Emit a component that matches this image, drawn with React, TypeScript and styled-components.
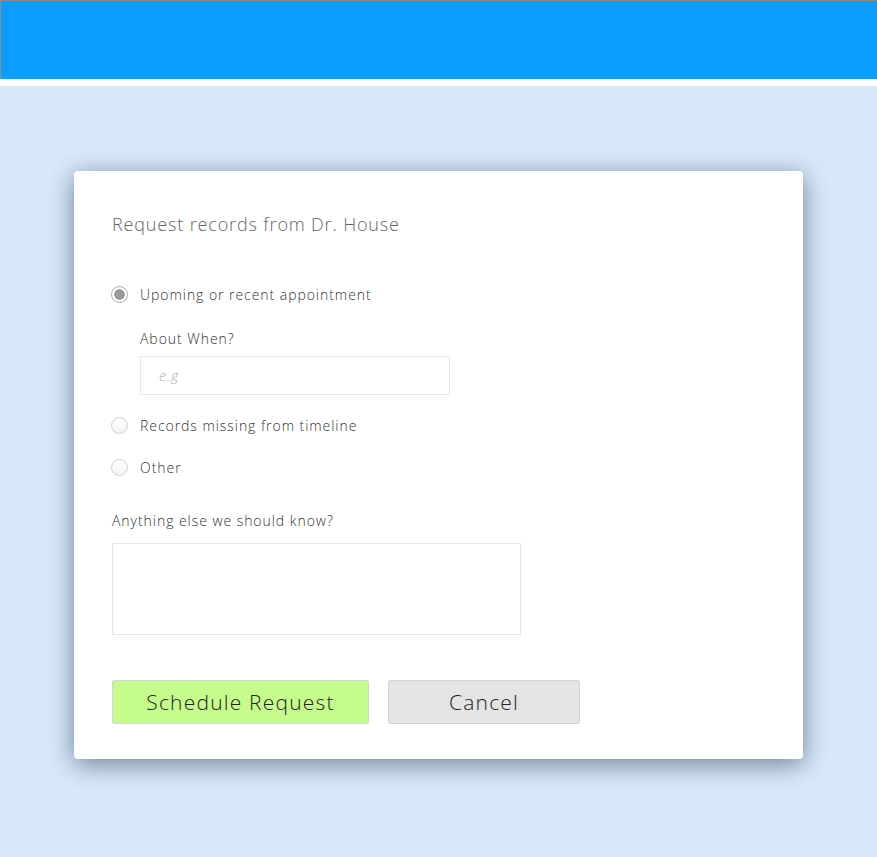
import * as React from "react";
import styled, { createGlobalStyle } from "styled-components";

const GlobalStyle = createGlobalStyle`
  html, body {
    margin: 0;
    padding: 0;
    background: #d9e9fa;
  }
  * {
    box-sizing: border-box;
  }
`;

interface Option {
  id: string;
  label: string;
}

const options: Option[] = [
  { id: "upcoming", label: "Upoming or recent appointment" },
  { id: "missing", label: "Records missing from timeline" },
  { id: "other", label: "Other" }
];

const App: React.FC = (): JSX.Element => {
  const [selected, setSelected] = React.useState("upcoming");

  return (
    <Page>
      <GlobalStyle />
      <TopBar />
      <Gap />
      <Content>
        <Card>
          <Title>Request records from Dr. House</Title>

          <Options>
            {options.map(option => (
              <React.Fragment key={option.id}>
                <RadioRow onClick={() => setSelected(option.id)}>
                  <Radio checked={selected === option.id} />
                  <RadioLabel>{option.label}</RadioLabel>
                </RadioRow>
                {option.id === "upcoming" && selected === "upcoming" && (
                  <SubField>
                    <FieldLabel>About When?</FieldLabel>
                    <WhenInput placeholder="e.g" />
                  </SubField>
                )}
              </React.Fragment>
            ))}
          </Options>

          <NotesLabel>Anything else we should know?</NotesLabel>
          <Notes />

          <Actions>
            <ActionButton variant="primary">Schedule Request</ActionButton>
            <ActionButton variant="secondary">Cancel</ActionButton>
          </Actions>
        </Card>
      </Content>
    </Page>
  );
};

export default App;

const Page = styled.div`
  min-height: 857px;
  background: #d9e9fa;
  font-family: "Open Sans", "Liberation Sans", sans-serif;
`;

const TopBar = styled.div`
  height: 79px;
  background: #0c9eff;
  border-top: 1px solid #8c8c8c;
  border-left: 1px solid #8c8c8c;
`;

const Gap = styled.div`
  height: 7px;
  background: #ffffff;
`;

const Content = styled.div`
  padding: 85px 0 0 74px;
`;

const Card = styled.div`
  width: 729px;
  height: 588px;
  background: #ffffff;
  border-radius: 4px;
  box-shadow: 0 5px 26px rgba(35, 55, 80, 0.6);
  padding: 41px 38px 0;
  display: flex;
  flex-direction: column;
`;

const Title = styled.h1`
  margin: 0;
  font-size: 18px;
  line-height: 24px;
  font-weight: 300;
  letter-spacing: 0.85px;
  color: #666;
`;

const Options = styled.div`
  display: flex;
  flex-direction: column;
  gap: 22px;
  margin-top: 48px;
`;

const RadioRow = styled.label`
  display: flex;
  align-items: center;
  gap: 12px;
  height: 20px;
  cursor: pointer;
`;

const Radio = styled.span<{ checked: boolean }>`
  width: 17px;
  height: 17px;
  border-radius: 50%;
  margin-left: -1px;
  border: 1px solid ${p => (p.checked ? "#a8a8a8" : "#cfcfcf")};
  background: ${p =>
    p.checked
      ? "radial-gradient(circle, #9a9a9a 0 5px, #ffffff 5.5px)"
      : "linear-gradient(#ffffff, #f3f3f3)"};
  flex-shrink: 0;
`;

const RadioLabel = styled.span`
  font-size: 14px;
  font-weight: 300;
  letter-spacing: 0.95px;
  color: #333;
`;

const SubField = styled.div`
  padding-left: 28px;
  margin-top: 3px;
  margin-bottom: -2px;
  display: flex;
  flex-direction: column;
  gap: 7px;
`;

const FieldLabel = styled.div`
  font-size: 14px;
  font-weight: 300;
  line-height: 20px;
  letter-spacing: 0.95px;
  color: #333;
`;

const WhenInput = styled.input`
  width: 310px;
  height: 39px;
  border: 1px solid #e6e6e6;
  padding: 0 18px;
  font-family: "Open Sans", "Liberation Sans", sans-serif;
  font-size: 14px;
  letter-spacing: 1px;
  outline: none;

  &::placeholder {
    color: #aaa;
    font-style: italic;
    font-weight: 300;
  }
`;

const NotesLabel = styled.div`
  margin-top: 34px;
  font-size: 14px;
  font-weight: 300;
  line-height: 20px;
  letter-spacing: 0.95px;
  color: #333;
`;

const Notes = styled.textarea`
  margin-top: 12px;
  width: 409px;
  height: 92px;
  border: 1px solid #e6e6e6;
  resize: none;
  outline: none;
`;

const Actions = styled.div`
  display: flex;
  gap: 19px;
  margin-top: 45px;
`;

const ActionButton = styled.button<{ variant: "primary" | "secondary" }>`
  height: 44px;
  width: ${p => (p.variant === "primary" ? "257px" : "192px")};
  border: 1px solid #d4d4d4;
  border-radius: 2px;
  background: ${p => (p.variant === "primary" ? "#c6fc8c" : "#e4e4e4")};
  font-family: "Open Sans", "Liberation Sans", sans-serif;
  font-weight: 300;
  font-size: 21px;
  letter-spacing: 1.2px;
  color: #222;
  cursor: pointer;
`;
